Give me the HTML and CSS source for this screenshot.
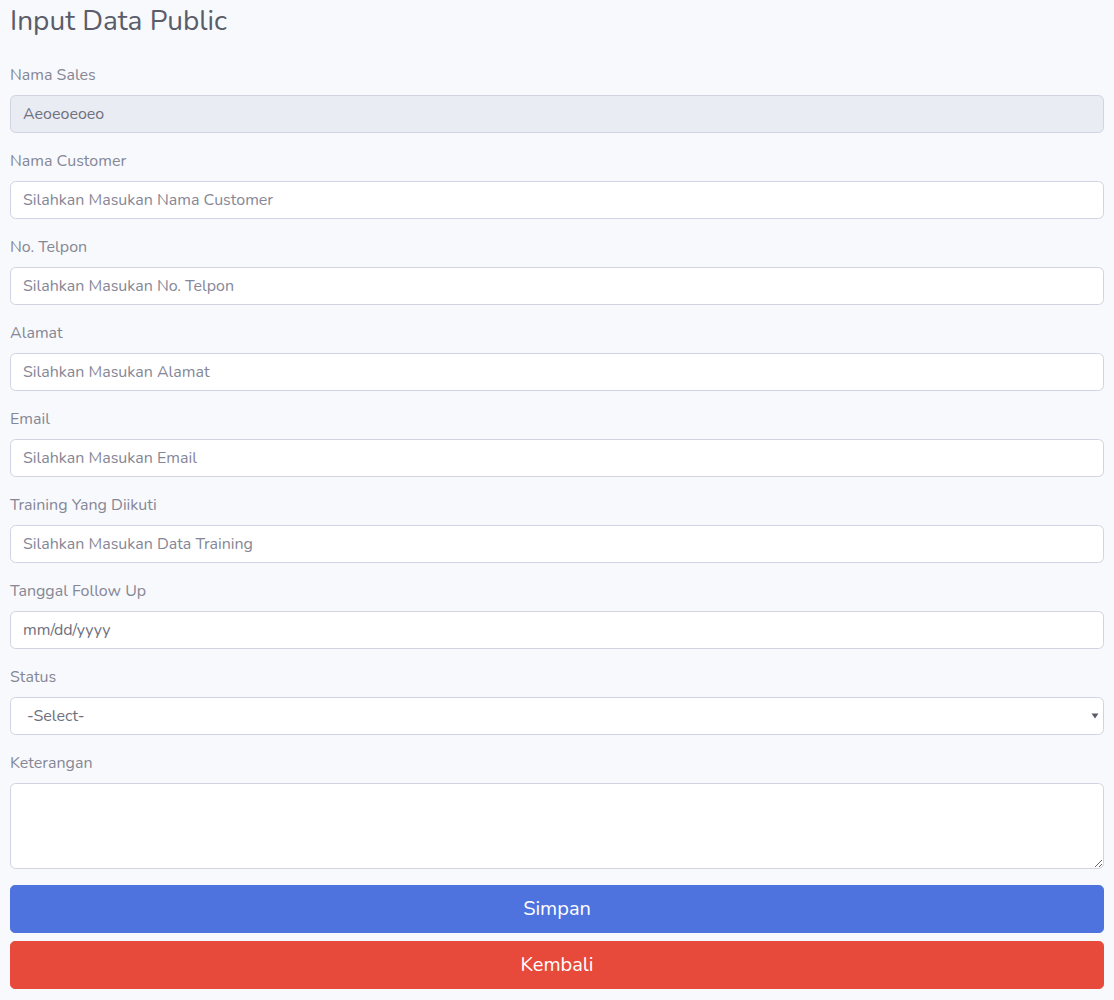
FILE: index.html
```html
<!DOCTYPE html>
<html lang="id">
<head>
<meta charset="utf-8">
<title>Input Data Public</title>
<link rel="stylesheet" href="styles.css">
</head>
<body>
<div class="page">
  <h3 class="page-title">Input Data Public</h3>
  <form class="form">
    <div class="form-group">
      <label class="label">Nama Sales</label>
      <input class="control" type="text" value="Aeoeoeoeo" disabled>
    </div>
    <div class="form-group">
      <label class="label">Nama Customer</label>
      <input class="control" type="text" placeholder="Silahkan Masukan Nama Customer">
    </div>
    <div class="form-group">
      <label class="label">No. Telpon</label>
      <input class="control" type="text" placeholder="Silahkan Masukan No. Telpon">
    </div>
    <div class="form-group">
      <label class="label">Alamat</label>
      <input class="control" type="text" placeholder="Silahkan Masukan Alamat">
    </div>
    <div class="form-group">
      <label class="label">Email</label>
      <input class="control" type="text" placeholder="Silahkan Masukan Email">
    </div>
    <div class="form-group">
      <label class="label">Training Yang Diikuti</label>
      <input class="control" type="text" placeholder="Silahkan Masukan Data Training">
    </div>
    <div class="form-group">
      <label class="label">Tanggal Follow Up</label>
      <input class="control control-date" type="text" placeholder="mm/dd/yyyy">
    </div>
    <div class="form-group">
      <label class="label">Status</label>
      <div class="select-wrap">
        <select class="control control-select">
          <option>-Select-</option>
        </select>
        <svg class="select-arrow" width="8" height="6" viewBox="0 0 8 6"><path d="M0.5 0.5 L7.5 0.5 L4 5.5 Z" fill="#5a5c69"/></svg>
      </div>
    </div>
    <div class="form-group">
      <label class="label">Keterangan</label>
      <textarea class="control control-area" rows="3"></textarea>
    </div>
    <div class="actions">
      <button type="button" class="btn btn-primary">Simpan</button>
      <button type="button" class="btn btn-danger">Kembali</button>
    </div>
  </form>
</div>
</body>
</html>
```

FILE: styles.css
```css
* { box-sizing: border-box; }

html, body {
  margin: 0;
  padding: 0;
  background: #f8f9fc;
}

body {
  font-family: "Nunito", "Lato", "Noto Sans", sans-serif;
  font-size: 16px;
  line-height: 1.5;
  color: #858796;
}

.page {
  padding: 5px 10px 10px;
}

.page-title {
  margin: 0 0 24px;
  font-size: 28px;
  font-weight: 400;
  line-height: 1.2;
  color: #5a5c69;
}

.form-group {
  margin-bottom: 16px;
}

.label {
  display: block;
  margin-bottom: 8px;
  line-height: 24px;
  color: #858796;
}

.control {
  display: block;
  width: 100%;
  height: 38px;
  padding: 6px 12px;
  font-family: inherit;
  font-size: 16px;
  line-height: 24px;
  color: #6e707e;
  background: #fff;
  border: 1px solid #d1d3e2;
  border-radius: 5.6px;
  outline: none;
}

.control::placeholder {
  color: #858796;
  opacity: 1;
}

.control:disabled {
  background: #eaecf4;
  color: #6e707e;
  opacity: 1;
}

.control-date::placeholder {
  color: #6e707e;
}

.select-wrap {
  position: relative;
}

.control-select {
  appearance: none;
  -webkit-appearance: none;
  padding-left: 16px;
  color: #6e707e;
}

.select-arrow {
  position: absolute;
  right: 5px;
  top: 16px;
}

.control-area {
  height: 86px;
  resize: vertical;
}

.actions {
  display: flex;
  flex-direction: column;
  gap: 8px;
}

.btn {
  display: block;
  width: 100%;
  height: 48px;
  padding: 8px 16px;
  font-family: inherit;
  font-size: 20px;
  line-height: 30px;
  color: #fff;
  border: 1px solid transparent;
  border-radius: 4.8px;
  cursor: pointer;
}

.btn-primary {
  background: #4e73df;
  border-color: #4e73df;
}

.btn-danger {
  background: #e74a3b;
  border-color: #e74a3b;
}
```
